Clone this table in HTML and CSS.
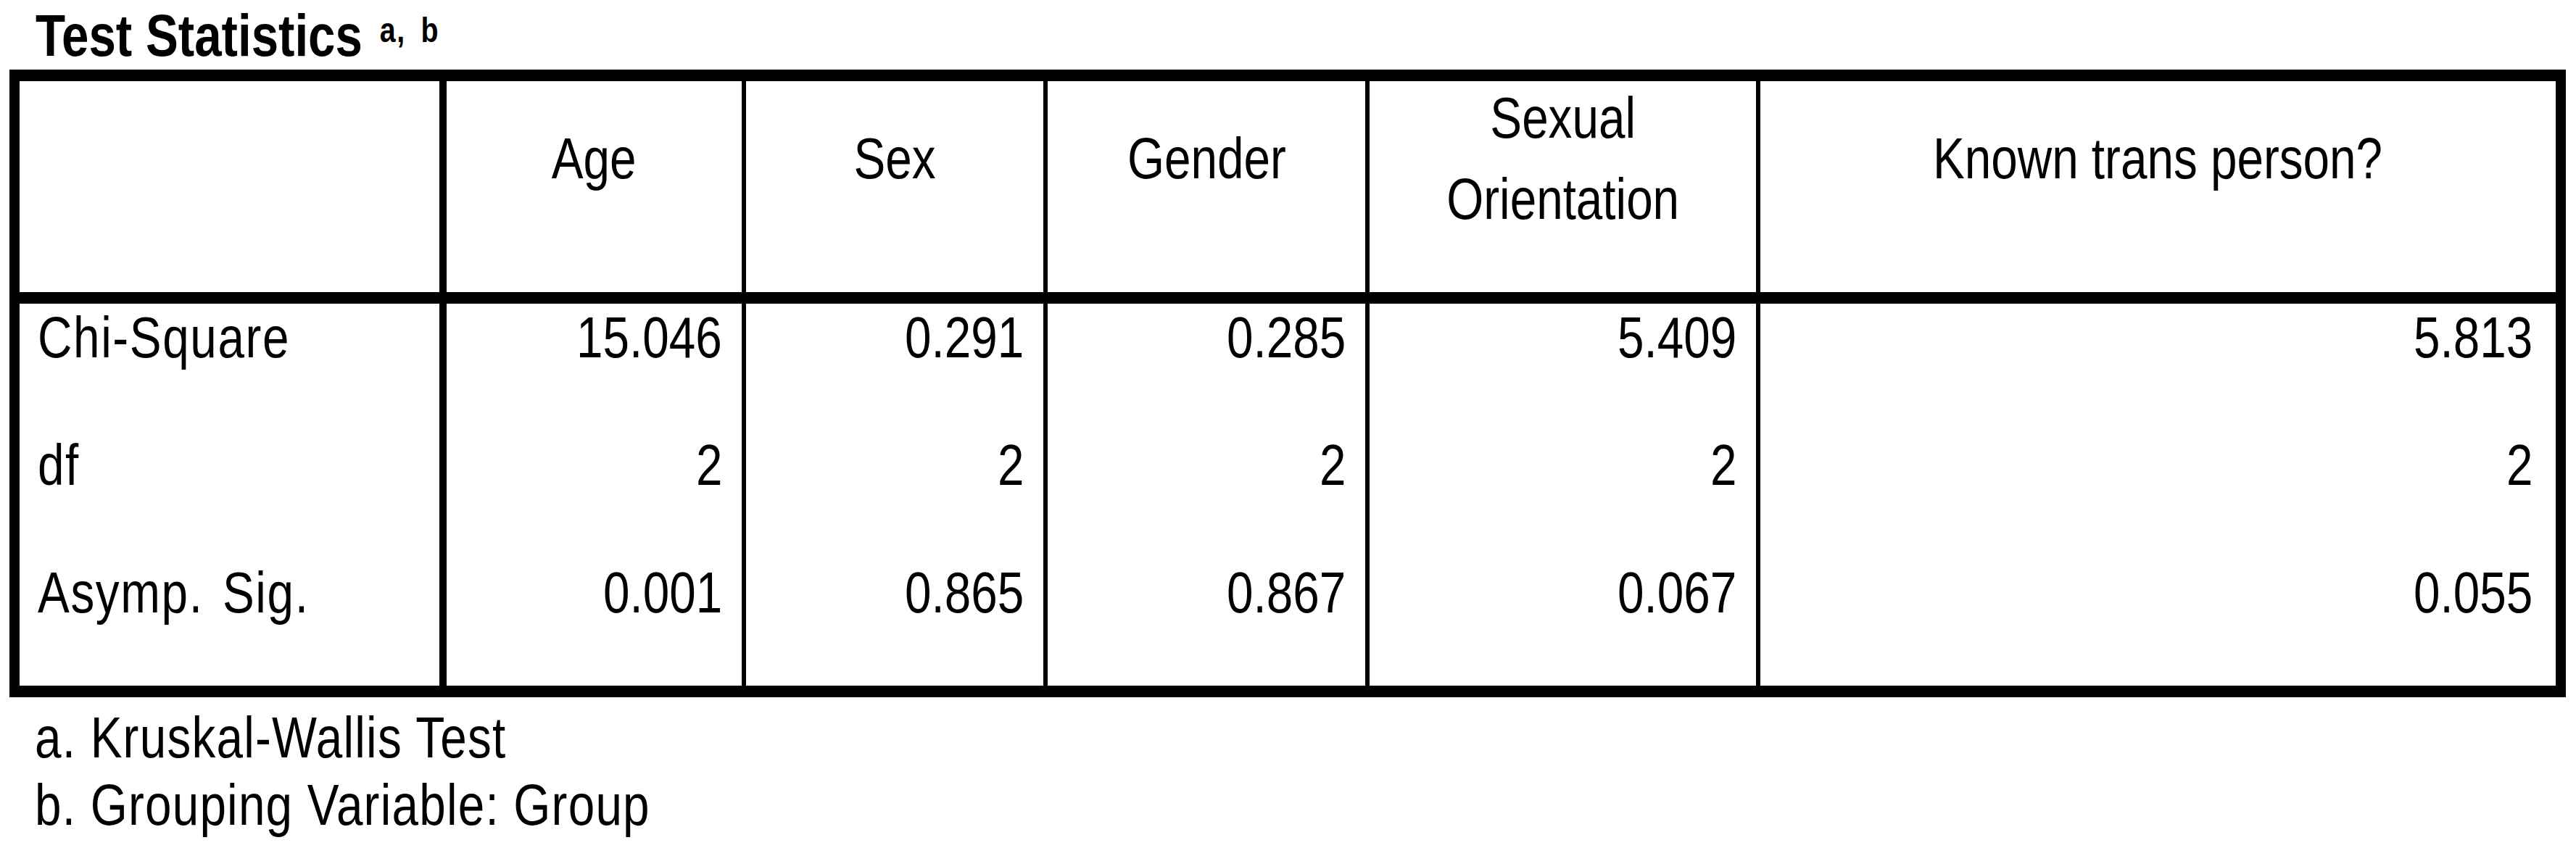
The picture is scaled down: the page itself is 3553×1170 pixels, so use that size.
FILE: index.html
```html
<!DOCTYPE html>
<html lang="en">
<head>
    <meta charset="UTF-8">
    <title>Test Statistics</title>
    <link rel="stylesheet" href="styles.css">
</head>
<body>
    <div class="output">
        <div class="title"><span class="txt">Test Statistics<sup>a, b</sup></span></div>

        <table class="stats">
            <thead>
                <tr>
                    <th class="col-label"></th>
                    <th class="col-age"><div class="head-text"><span class="txt">Age</span></div></th>
                    <th class="col-sex"><div class="head-text"><span class="txt">Sex</span></div></th>
                    <th class="col-gender"><div class="head-text"><span class="txt">Gender</span></div></th>
                    <th class="col-orient"><div class="head-text"><span class="txt">Sexual<br>Orientation</span></div></th>
                    <th class="col-known"><div class="head-text"><span class="txt">Known trans person?</span></div></th>
                </tr>
            </thead>
            <tbody>
                <tr>
                    <td class="label"><span class="txt">Chi-Square</span></td>
                    <td><span class="txt">15.046</span></td>
                    <td><span class="txt">0.291</span></td>
                    <td><span class="txt">0.285</span></td>
                    <td><span class="txt">5.409</span></td>
                    <td class="last"><span class="txt">5.813</span></td>
                </tr>
                <tr>
                    <td class="label"><span class="txt">df</span></td>
                    <td><span class="txt">2</span></td>
                    <td><span class="txt">2</span></td>
                    <td><span class="txt">2</span></td>
                    <td><span class="txt">2</span></td>
                    <td class="last"><span class="txt">2</span></td>
                </tr>
                <tr class="bottom-row">
                    <td class="label"><span class="txt">Asymp. Sig.</span></td>
                    <td><span class="txt">0.001</span></td>
                    <td><span class="txt">0.865</span></td>
                    <td><span class="txt">0.867</span></td>
                    <td><span class="txt">0.067</span></td>
                    <td class="last"><span class="txt">0.055</span></td>
                </tr>
            </tbody>
        </table>

        <div class="footnotes">
            <div><span class="txt">a. Kruskal-Wallis Test</span></div>
            <div><span class="txt">b. Grouping Variable: Group</span></div>
        </div>
    </div>
</body>
</html>
```

FILE: styles.css
```css
* {
    box-sizing: border-box;
}

body {
    margin: 0;
    background: #fff;
    color: #000;
    font-family: "Liberation Sans", Arial, sans-serif;
    font-size: 80px;
}

/* narrow face (Arial Narrow look) */
.txt {
    display: inline-block;
    transform: scaleX(0.82);
}

.output {
    padding: 9px 0 0 13px;
}

.title {
    font-weight: bold;
    font-size: 82px;
    line-height: 80px;
    margin: 0 0 7px 36px;
}

.title .txt {
    transform-origin: left center;
}

.title sup {
    font-size: 48px;
    line-height: 0;
    vertical-align: 19px;
    margin-left: 29px;
    letter-spacing: 2px;
    word-spacing: 10px;
}

.stats {
    width: 3526px;
    table-layout: fixed;
    border-collapse: separate;
    border-spacing: 0;
    border: solid #000;
    border-width: 16px 14px;
}

.stats th,
.stats td {
    padding: 0;
    font-weight: normal;
}

.stats th + th,
.stats td + td {
    border-left: 6px solid #000;
}

.stats th.col-age,
.stats td.label + td {
    border-left-width: 10px;
}

.col-label { width: 579px; }
.col-age { width: 417px; }
.col-sex { width: 416px; }
.col-gender { width: 444px; }
.col-orient { width: 539px; }
.col-known { width: 1103px; }

.stats thead tr {
    height: 307px;
}

.stats thead th {
    border-bottom: 16px solid #000;
    text-align: center;
    vertical-align: middle;
}

.head-text {
    line-height: 112px;
    margin: -11px 0 67px;
}

.stats tbody tr {
    height: 176px;
}

.stats tbody tr.bottom-row {
    height: 175px;
}

.stats td {
    vertical-align: top;
    line-height: 80px;
    padding: 7px 27px 0 0;
    text-align: right;
}

.stats td .txt {
    transform-origin: right center;
}

.stats td.label {
    text-align: left;
    padding-left: 25px;
    letter-spacing: 2px;
    word-spacing: 8px;
}

.stats td.label .txt {
    transform-origin: left center;
}

.stats td.last {
    padding-right: 32px;
}

.footnotes {
    margin-top: 9px;
    padding-left: 35px;
    line-height: 93px;
    letter-spacing: 1.5px;
}

.footnotes .txt {
    transform-origin: left center;
}
```
